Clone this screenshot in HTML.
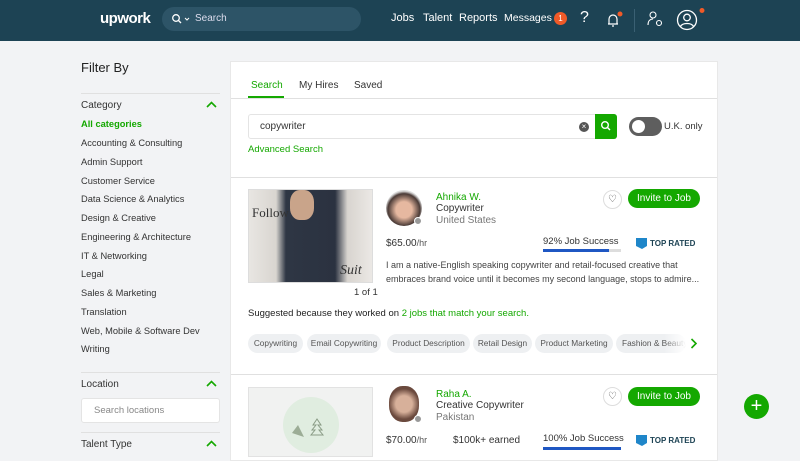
<!DOCTYPE html>
<html><head><style>
*{margin:0;padding:0;box-sizing:border-box}
body{width:800px;height:450px;overflow:hidden;background:#f2f3f5;font-family:"Liberation Sans",sans-serif;color:#222;position:relative;font-size:11px}
.a{position:absolute;white-space:nowrap}
.hdr{position:absolute;left:0;top:0;width:800px;height:41px;background:#1d4354}
.g{color:#14a800}
.cat{left:81px;font-size:9.3px;color:#333}
.line{position:absolute;height:1px;background:#e0e0e0}
.chip{position:absolute;top:334px;height:19px;border-radius:10px;background:#eef0f2;font-size:8.3px;color:#555;line-height:19px;text-align:center;white-space:nowrap}
.btn{position:absolute;background:#14a800;color:#fff;border-radius:14px;font-size:10px;text-align:center}
.heart{position:absolute;width:19px;height:19px;border:1px solid #ddd;border-radius:50%;text-align:center;font-size:10px;line-height:17px;color:#444;background:#fff}
</style></head><body>
<div class="hdr"></div>
<div class="a" style="left:100px;top:10px;color:#fff;font-size:15px;font-weight:bold;letter-spacing:-0.5px">upwork</div>
<div class="a" style="left:162px;top:7px;width:199px;height:24px;border-radius:12px;background:#2d5467"></div>
<svg class="a" style="left:171px;top:13px" width="22" height="12"><circle cx="5" cy="5" r="3.3" stroke="#fff" stroke-width="1.3" fill="none"/><line x1="7.5" y1="7.5" x2="10" y2="10" stroke="#fff" stroke-width="1.3"/><path d="M14 5l2 2 2-2" stroke="#fff" fill="none"/></svg>
<div class="a" style="left:195px;top:13px;color:#dde;font-size:10px">Search</div>
<div class="a" style="left:391px;top:12px;color:#fff;font-size:11px">Jobs</div>
<div class="a" style="left:423px;top:12px;color:#fff;font-size:11px">Talent</div>
<div class="a" style="left:459px;top:12px;color:#fff;font-size:11px">Reports</div>
<div class="a" style="left:504px;top:12px;color:#fff;font-size:10.5px">Messages</div>
<div class="a" style="left:554px;top:12px;width:13px;height:13px;border-radius:50%;background:#f05a28;color:#fff;font-size:8px;text-align:center;line-height:13px">1</div>
<div class="a" style="left:580px;top:9px;color:#fff;font-size:16px">?</div>
<svg class="a" style="left:604px;top:10px" width="20" height="20"><path d="M4 14h10M5 14V9a4 4 0 0 1 8 0v5M8 16h2" stroke="#fff" stroke-width="1.2" fill="none"/><circle cx="16" cy="4" r="2.5" fill="#f05a28"/></svg>
<div class="a" style="left:634px;top:9px;width:1px;height:23px;background:#3a6073"></div>
<svg class="a" style="left:647px;top:10px" width="18" height="18"><circle cx="6" cy="5" r="3" stroke="#fff" fill="none" stroke-width="1.1"/><path d="M1 15c0-4 2-6 5-6" stroke="#fff" fill="none" stroke-width="1.1"/><circle cx="12" cy="13" r="2.5" stroke="#fff" fill="none" stroke-width="1.1"/></svg>
<svg class="a" style="left:676px;top:8px" width="32" height="24"><circle cx="11" cy="12" r="9.5" stroke="#fff" fill="none" stroke-width="1.3"/><circle cx="11" cy="9.5" r="3.3" stroke="#fff" fill="none" stroke-width="1.3"/><path d="M4.5 18.5c2-4 11-4 13 0" stroke="#fff" fill="none" stroke-width="1.3"/><circle cx="26" cy="2.5" r="2.5" fill="#f05a28"/></svg>

<div class="a" style="left:81px;top:60px;font-size:13px;font-weight:500">Filter By</div>
<div class="line" style="left:81px;top:93px;width:139px"></div>
<div class="a" style="left:81px;top:100px;font-size:10px;color:#333">Category</div>
<svg class="a" style="left:206px;top:101px" width="11" height="8"><path d="M1 6l4.5-4.5L10 6" stroke="#14a800" stroke-width="1.6" fill="none"/></svg>
<div class="a cat g" style="top:119px;font-weight:bold;color:#14a800">All categories</div>
<div class="a cat" style="top:138px">Accounting &amp; Consulting</div>
<div class="a cat" style="top:157px">Admin Support</div>
<div class="a cat" style="top:176px">Customer Service</div>
<div class="a cat" style="top:194px">Data Science &amp; Analytics</div>
<div class="a cat" style="top:213px">Design &amp; Creative</div>
<div class="a cat" style="top:232px">Engineering &amp; Architecture</div>
<div class="a cat" style="top:251px">IT &amp; Networking</div>
<div class="a cat" style="top:269px">Legal</div>
<div class="a cat" style="top:288px">Sales &amp; Marketing</div>
<div class="a cat" style="top:307px">Translation</div>
<div class="a cat" style="top:326px">Web, Mobile &amp; Software Dev</div>
<div class="a cat" style="top:344px">Writing</div>
<div class="line" style="left:81px;top:372px;width:139px"></div>
<div class="a" style="left:81px;top:379px;font-size:10px;color:#333">Location</div>
<svg class="a" style="left:206px;top:380px" width="11" height="8"><path d="M1 6l4.5-4.5L10 6" stroke="#14a800" stroke-width="1.6" fill="none"/></svg>
<div class="a" style="left:81px;top:398px;width:139px;height:25px;background:#fff;border:1px solid #e4e4e4;border-radius:3px;font-size:9.5px;color:#888;padding:6px 0 0 12px">Search locations</div>
<div class="line" style="left:81px;top:432px;width:139px"></div>
<div class="a" style="left:81px;top:439px;font-size:10px;color:#333">Talent Type</div>
<svg class="a" style="left:206px;top:440px" width="11" height="8"><path d="M1 6l4.5-4.5L10 6" stroke="#14a800" stroke-width="1.6" fill="none"/></svg>

<div class="a" style="left:230px;top:61px;width:488px;height:400px;background:#fff;border:1px solid #e8e8e8"></div>
<div class="a g" style="left:251px;top:80px;font-size:10px">Search</div>
<div class="a" style="left:248px;top:96px;width:36px;height:2px;background:#14a800"></div>
<div class="a" style="left:299px;top:80px;font-size:10px;color:#333">My Hires</div>
<div class="a" style="left:354px;top:80px;font-size:10px;color:#333">Saved</div>
<div class="line" style="left:231px;top:98px;width:486px"></div>
<div class="a" style="left:248px;top:114px;width:369px;height:25px;border:1px solid #e4e4e4;border-radius:3px"></div>
<div class="a" style="left:260px;top:121px;font-size:10px;color:#333">copywriter</div>
<div class="a" style="left:579px;top:122px;width:10px;height:10px;border-radius:50%;background:#555;color:#fff;font-size:8px;line-height:10px;text-align:center">×</div>
<div class="a" style="left:595px;top:114px;width:22px;height:25px;background:#14a800;border-radius:0 3px 3px 0"></div>
<svg class="a" style="left:600px;top:120px" width="12" height="12"><circle cx="5" cy="5" r="3.3" stroke="#fff" stroke-width="1.4" fill="none"/><line x1="7.5" y1="7.5" x2="10" y2="10" stroke="#fff" stroke-width="1.4"/></svg>
<div class="a" style="left:629px;top:117px;width:33px;height:19px;border-radius:10px;background:#5e5e5e"></div>
<div class="a" style="left:632px;top:120px;width:13px;height:13px;border-radius:50%;background:#fff"></div>
<div class="a" style="left:664px;top:121px;font-size:9.5px;color:#333">U.K. only</div>
<div class="a g" style="left:248px;top:144px;font-size:9.5px">Advanced Search</div>
<div class="line" style="left:231px;top:177px;width:486px"></div>

<div class="a" style="left:248px;top:189px;width:125px;height:94px;background:linear-gradient(90deg,#e8e6e2 0%,#d9d5d0 22%,#2e3644 30%,#2b3240 70%,#d8d4cf 80%,#ebe8e5 100%);border:1px solid #ddd"></div>
<div class="a" style="left:290px;top:190px;width:24px;height:30px;border-radius:40%;background:#c9a48a"></div>
<div class="a" style="left:252px;top:205px;font-family:'Liberation Serif',serif;font-size:13px;color:#333">Follow</div>
<div class="a" style="left:340px;top:263px;font-family:'Liberation Serif',serif;font-style:italic;font-size:14px;color:#333">Suit</div>
<div class="a" style="left:354px;top:287px;font-size:9.5px;color:#333">1 of 1</div>
<div class="a" style="left:386px;top:190px;width:36px;height:36px;border-radius:50%;background:radial-gradient(circle at 50% 55%,#e6b8a0 30%,#4a3a36 60%,#ddd 70%)"></div>
<div class="a" style="left:414px;top:217px;width:8px;height:8px;border-radius:50%;background:#999;border:1.5px solid #fff"></div>
<div class="a g" style="left:436px;top:192px;font-size:10px">Ahnika W.</div>
<div class="a" style="left:436px;top:203px;font-size:10px;color:#333">Copywriter</div>
<div class="a" style="left:436px;top:215px;font-size:10px;color:#777">United States</div>
<div class="heart" style="left:603px;top:190px">♡</div>
<div class="btn" style="left:628px;top:189px;width:72px;height:19px;line-height:19px">Invite to Job</div>
<div class="a" style="left:386px;top:238px;font-size:10px;color:#333">$65.00<span style="font-size:9px;color:#555">/hr</span></div>
<div class="a" style="left:543px;top:236px;font-size:9.5px;color:#333">92% Job Success</div>
<div class="a" style="left:543px;top:249px;width:78px;height:3px;background:#ddd"></div>
<div class="a" style="left:543px;top:249px;width:66px;height:3px;background:#1f57c3"></div>
<svg class="a" style="left:636px;top:238px" width="12" height="12"><path d="M0 0h11v8l-5 3-6-3z" fill="#1f86c9"/></svg>
<div class="a" style="left:650px;top:239px;font-size:8px;font-weight:bold;color:#1d4354">TOP RATED</div>
<div class="a" style="left:386px;top:258px;font-size:9px;color:#444;line-height:14px">I am a native-English speaking copywriter and retail-focused creative that<br>embraces brand voice until it becomes my second language, stops to admire...</div>
<div class="a" style="left:248px;top:308px;font-size:9.5px;color:#222">Suggested because they worked on <span class="g">2 jobs that match your search.</span></div>
<div class="chip" style="left:248px;width:55px">Copywriting</div>
<div class="chip" style="left:307px;width:74px">Email Copywriting</div>
<div class="chip" style="left:387px;width:83px">Product Description</div>
<div class="chip" style="left:473px;width:59px">Retail Design</div>
<div class="chip" style="left:535px;width:78px">Product Marketing</div>
<div class="chip" style="left:616px;width:70px;overflow:hidden;text-align:left;padding-left:6px">Fashion &amp; Beauty</div>
<div class="a" style="left:664px;top:334px;width:22px;height:19px;background:linear-gradient(90deg,rgba(255,255,255,0),#fff)"></div>
<svg class="a" style="left:690px;top:338px" width="8" height="11"><path d="M1.5 1l4.5 4.5L1.5 10" stroke="#14a800" stroke-width="1.6" fill="none"/></svg>
<div class="line" style="left:231px;top:374px;width:486px"></div>

<div class="a" style="left:248px;top:387px;width:125px;height:70px;background:#f1f2f1;border:1px solid #e2e2e2"></div>
<div class="a" style="left:283px;top:397px;width:56px;height:56px;border-radius:50%;background:#e0ede0"></div>
<svg class="a" style="left:290px;top:415px" width="40" height="30"><path d="M2 18l6-8 6 12z" fill="#9cad96"/><path d="M27 4l-4 6h3l-4 5h3l-4 5h12l-4-5h3l-4-5h3z" fill="none" stroke="#8a9c86"/></svg>
<div class="a" style="left:389px;top:386px;width:30px;height:36px;border-radius:45%;background:radial-gradient(circle at 50% 50%,#d7b09a 35%,#6b4a3e 65%)"></div>
<div class="a" style="left:414px;top:415px;width:8px;height:8px;border-radius:50%;background:#999;border:1.5px solid #fff"></div>
<div class="a g" style="left:436px;top:389px;font-size:10px">Raha A.</div>
<div class="a" style="left:436px;top:400px;font-size:10px;color:#333">Creative Copywriter</div>
<div class="a" style="left:436px;top:412px;font-size:10px;color:#777">Pakistan</div>
<div class="heart" style="left:603px;top:387px">♡</div>
<div class="btn" style="left:628px;top:387px;width:72px;height:19px;line-height:19px">Invite to Job</div>
<div class="a" style="left:386px;top:435px;font-size:10px;color:#333">$70.00<span style="font-size:9px;color:#555">/hr</span></div>
<div class="a" style="left:453px;top:435px;font-size:10px;color:#333">$100k+ earned</div>
<div class="a" style="left:543px;top:433px;font-size:9.5px;color:#333">100% Job Success</div>
<div class="a" style="left:543px;top:447px;width:78px;height:3px;background:#1f57c3"></div>
<svg class="a" style="left:636px;top:435px" width="12" height="12"><path d="M0 0h11v8l-5 3-6-3z" fill="#1f86c9"/></svg>
<div class="a" style="left:650px;top:436px;font-size:8px;font-weight:bold;color:#1d4354">TOP RATED</div>

<div class="a" style="left:744px;top:394px;width:25px;height:25px;border-radius:50%;background:#14a800;color:#fff;font-size:20px;line-height:24px;text-align:center">+</div>
</body></html>
